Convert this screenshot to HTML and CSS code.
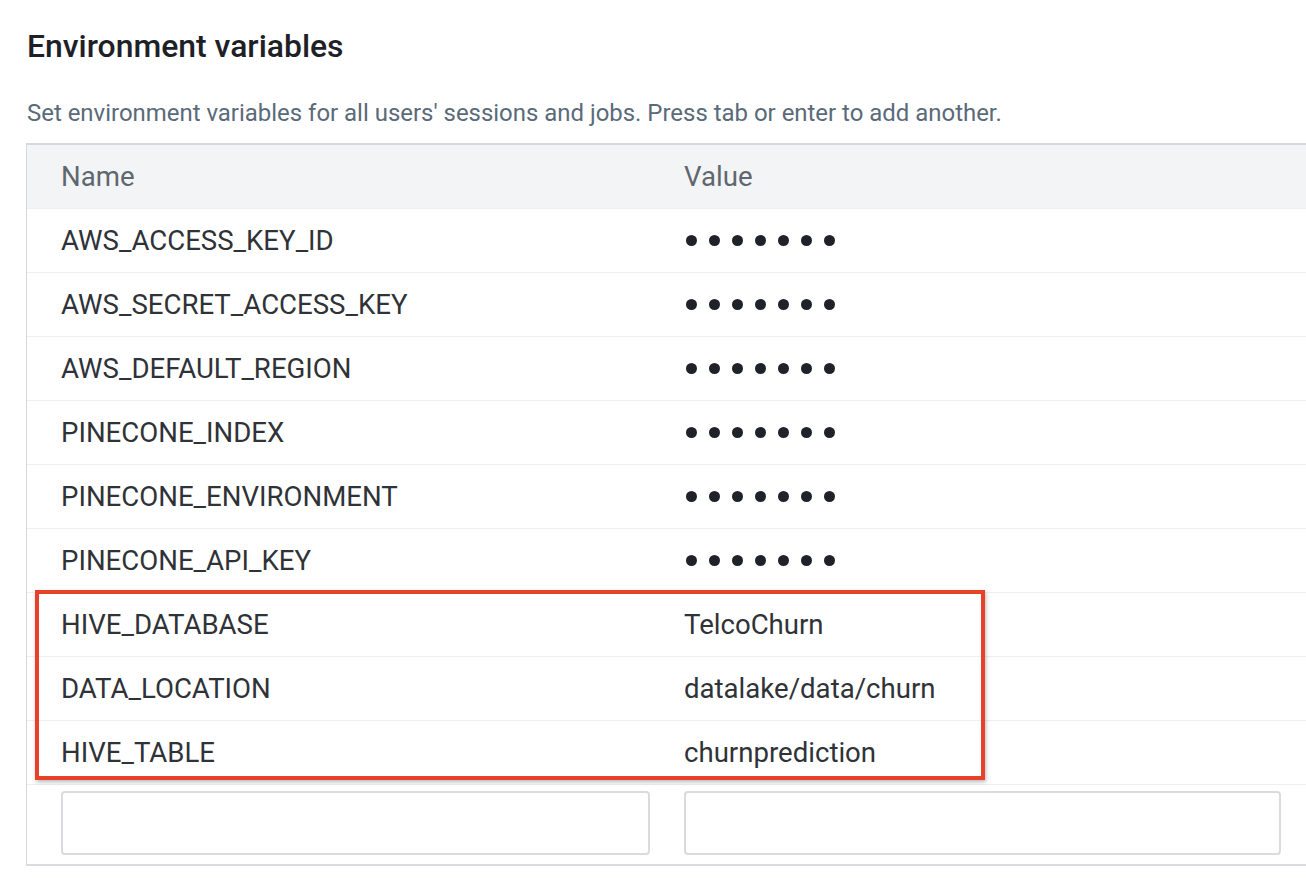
FILE: index.html
```html
<!DOCTYPE html>
<html lang="en">
<head>
<meta charset="utf-8">
<title>Environment variables</title>
<link rel="stylesheet" href="styles.css">
</head>
<body>
<main class="page">
  <h2 class="title">Environment variables</h2>
  <p class="desc">Set environment variables for all users' sessions and jobs. Press tab or enter to add another.</p>
  <div class="env-table">
    <div class="row head">
      <div class="cell">Name</div>
      <div class="cell">Value</div>
    </div>
    <div class="row"><div class="cell">AWS_ACCESS_KEY_ID</div><div class="cell"><span class="mask"><i></i><i></i><i></i><i></i><i></i><i></i><i></i></span></div></div>
    <div class="row"><div class="cell">AWS_SECRET_ACCESS_KEY</div><div class="cell"><span class="mask"><i></i><i></i><i></i><i></i><i></i><i></i><i></i></span></div></div>
    <div class="row"><div class="cell">AWS_DEFAULT_REGION</div><div class="cell"><span class="mask"><i></i><i></i><i></i><i></i><i></i><i></i><i></i></span></div></div>
    <div class="row"><div class="cell">PINECONE_INDEX</div><div class="cell"><span class="mask"><i></i><i></i><i></i><i></i><i></i><i></i><i></i></span></div></div>
    <div class="row"><div class="cell">PINECONE_ENVIRONMENT</div><div class="cell"><span class="mask"><i></i><i></i><i></i><i></i><i></i><i></i><i></i></span></div></div>
    <div class="row"><div class="cell">PINECONE_API_KEY</div><div class="cell"><span class="mask"><i></i><i></i><i></i><i></i><i></i><i></i><i></i></span></div></div>
    <div class="row"><div class="cell">HIVE_DATABASE</div><div class="cell">TelcoChurn</div></div>
    <div class="row"><div class="cell">DATA_LOCATION</div><div class="cell">datalake/data/churn</div></div>
    <div class="row"><div class="cell">HIVE_TABLE</div><div class="cell">churnprediction</div></div>
    <div class="row input-row">
      <div class="cell"><input class="field field-name" type="text" aria-label="Name"></div>
      <div class="cell"><input class="field field-value" type="text" aria-label="Value"></div>
    </div>
    <div class="highlight"></div>
  </div>
</main>
</body>
</html>
```
FILE: styles.css
```css
html, body {
  margin: 0;
  padding: 0;
  background: #ffffff;
  overflow: hidden;
}

body {
  font-family: Roboto, "Liberation Sans", Arial, sans-serif;
  color: #2b2f33;
}

.page {
  padding: 26px 0 0 26px;
}

.title {
  margin: 0 0 0 1px;
  font-size: 31.9px;
  line-height: 40px;
  font-weight: 500;
  color: #1d2127;
}

.desc {
  margin: 33px 0 0 1px;
  font-size: 23.95px;
  line-height: 28px;
  color: #5a6a79;
}

.env-table {
  position: relative;
  margin-top: 16px;
  border-top: 2px solid #d7d8dc;
  border-left: 1px solid #d7d8dc;
  border-bottom: 2px solid #dadbde;
}

.row {
  display: grid;
  grid-template-columns: 623px 1fr;
  height: 63px;
  border-bottom: 1px solid #eeeff1;
  font-size: 27.6px;
  color: #2f3338;
}

.cell {
  display: flex;
  align-items: center;
  padding-left: 34px;
  white-space: nowrap;
}

.head {
  background: #f3f4f6;
  color: #5f676e;
}

.mask {
  display: flex;
  gap: 12px;
  margin-left: 2px;
}

.mask i {
  display: block;
  width: 11px;
  height: 11px;
  border-radius: 50%;
  background: #1f2329;
}

.input-row {
  height: 79px;
  border-bottom: none;
  align-items: start;
}

.input-row .cell {
  padding-top: 6px;
}

.field {
  box-sizing: border-box;
  height: 64px;
  border: 2px solid #dbdbdf;
  border-radius: 4px;
  background: #fff;
  margin: 0;
}

.field-name {
  width: 591px;
}

.field-value {
  width: 597px;
}

.highlight {
  position: absolute;
  left: 8px;
  top: 445px;
  width: 942px;
  height: 182px;
  border: 4px solid #e8412a;
  box-shadow: 1px 2px 4px rgba(0, 0, 0, 0.28);
  pointer-events: none;
}
```
